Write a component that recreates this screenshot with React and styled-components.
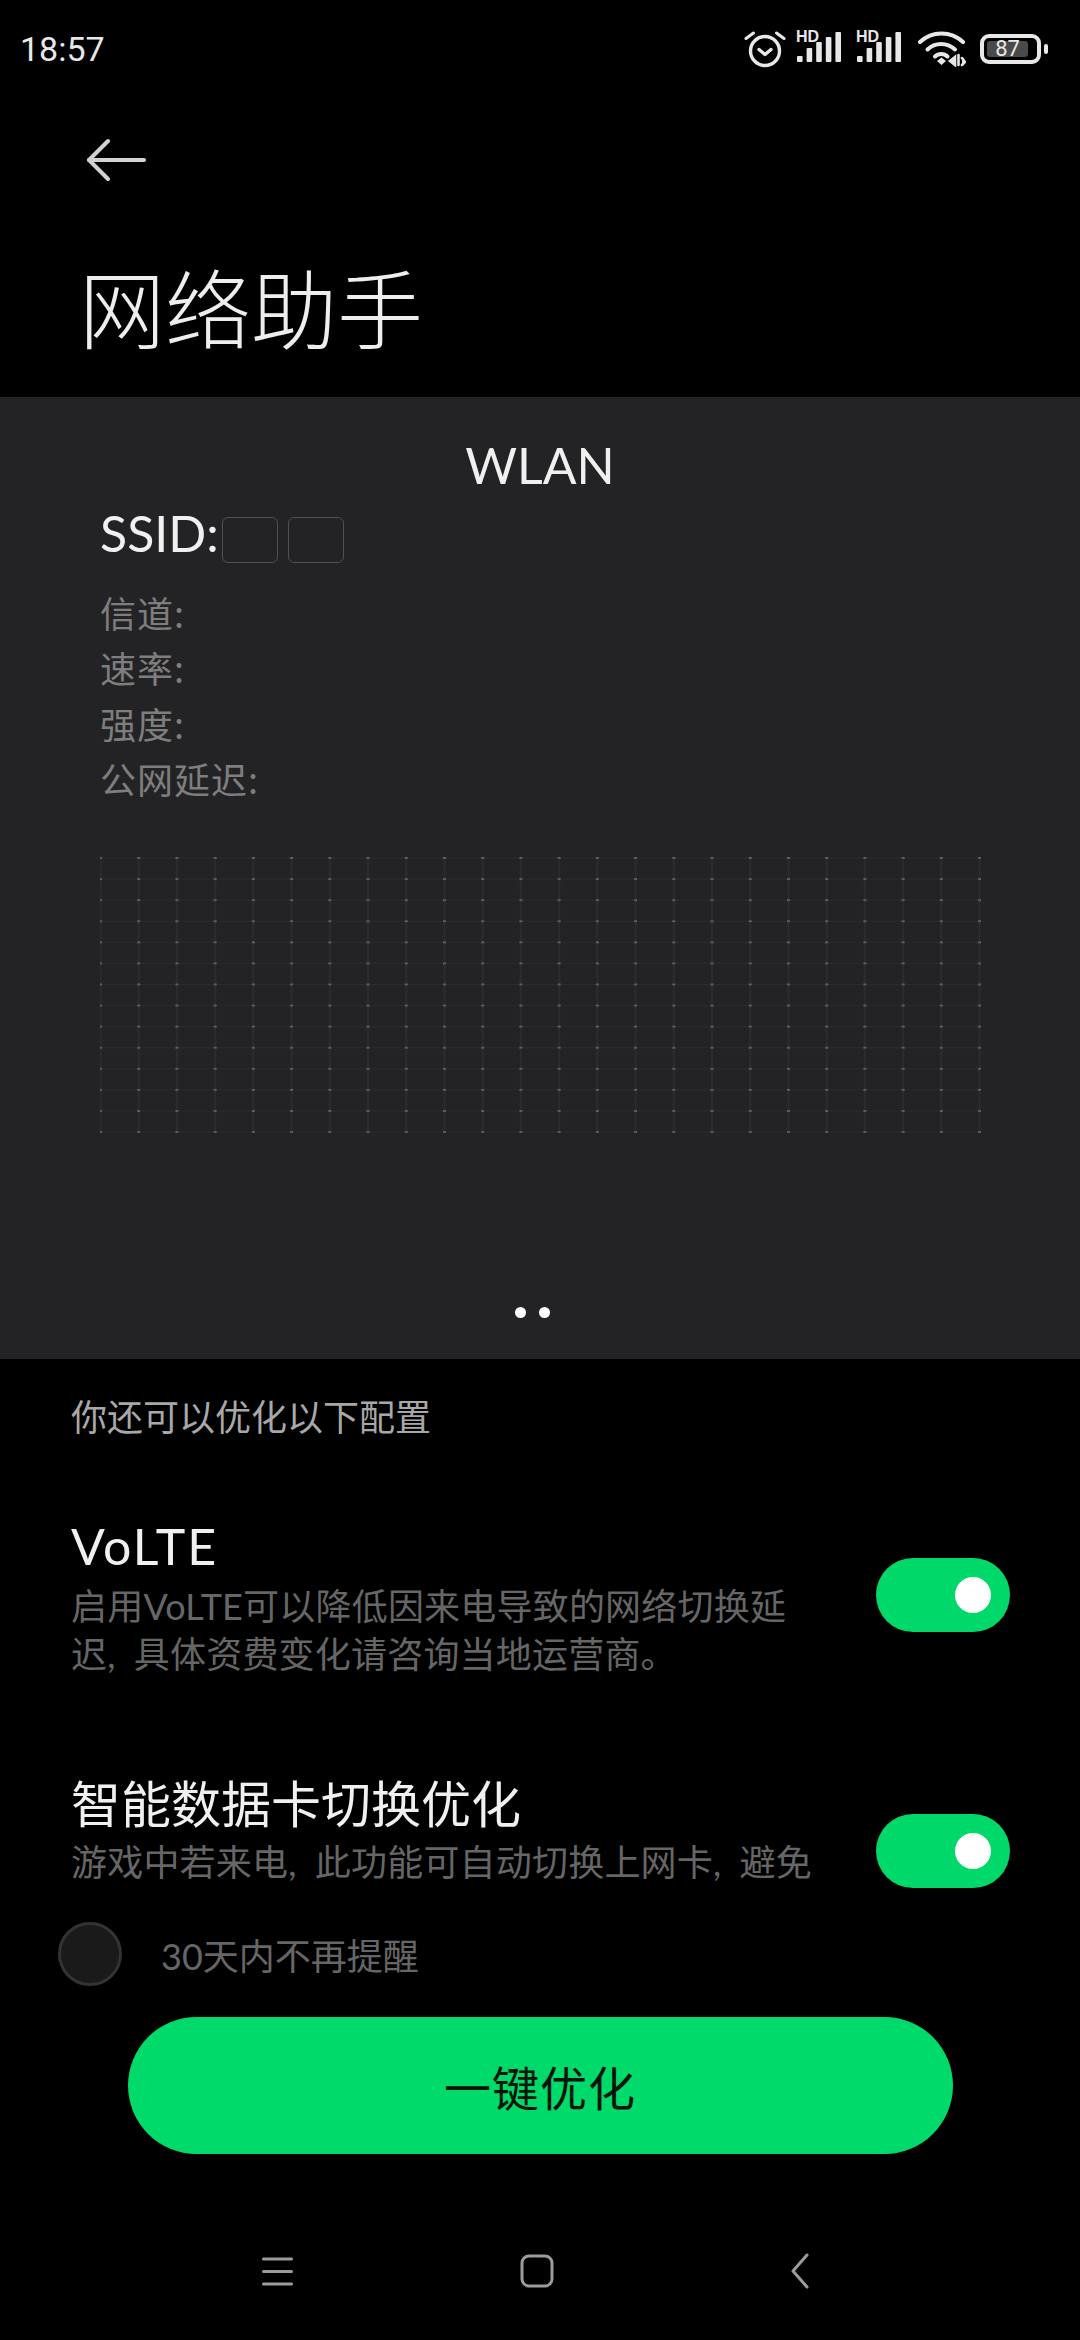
import React from "react";
import styled, { createGlobalStyle } from "styled-components";

const CJK = `"Noto Sans CJK SC", sans-serif`;
const LATIN = `Lato, "Noto Sans CJK SC", sans-serif`;

const Global = createGlobalStyle`
  html, body { margin: 0; padding: 0; background: #000; }
  * { box-sizing: border-box; }
`;

const Page = styled.div`
  width: 1080px;
  height: 2340px;
  background: #000;
  color: #fff;
  display: flex;
  flex-direction: column;
  overflow: hidden;
  font-family: ${CJK};
`;

const StatusBar = styled.div`
  height: 100px;
  padding: 0 39px 2px 20px;
  display: flex;
  align-items: center;
  justify-content: space-between;
`;

const Clock = styled.span`
  font-family: Roboto, sans-serif;
  font-size: 34px;
  color: #e8e8e8;
`;

const StatusIcons = styled.div`
  display: flex;
  align-items: center;
  gap: 10px;
`;

const Signal = styled.div`
  position: relative;
  width: 50px;
  height: 36px;
`;

const SignalTag = styled.span`
  position: absolute;
  left: 0;
  top: -3px;
  font-family: "Liberation Sans", sans-serif;
  font-weight: 700;
  font-size: 16px;
  line-height: 18px;
  color: #e8e8e8;
`;

const WifiSlot = styled.div`
  display: flex;
  margin-left: 2px;
`;

const Battery = styled.div`
  position: relative;
  width: 61px;
  height: 30px;
  border: 4px solid #e8e8e8;
  border-radius: 9px;
  margin-left: 4px;
  padding: 3px;
  &::after {
    content: "";
    position: absolute;
    right: -11px;
    top: 6px;
    width: 4px;
    height: 10px;
    border-radius: 2px;
    background: #e8e8e8;
  }
`;

const BatteryFill = styled.div`
  height: 100%;
  width: 41px;
  border-radius: 3px;
  background: #4a4a4a;
  display: flex;
  align-items: center;
  justify-content: center;
  font-family: Roboto, sans-serif;
  font-size: 22px;
  line-height: 16px;
  color: #e8e8e8;
`;

const BackRow = styled.div`
  height: 60px;
  margin-top: 30px;
  padding-left: 87px;
  display: flex;
  align-items: center;
`;

const Title = styled.h1`
  margin: 0;
  height: 207px;
  padding: 54px 0 0 79px;
  font-size: 86px;
  font-weight: 300;
  line-height: 124px;
  color: #eee;
`;

const Panel = styled.section`
  height: 962px;
  background: #232325;
  padding: 0 100px;
  display: flex;
  flex-direction: column;
  position: relative;
`;

const PanelHead = styled.div`
  margin-top: 38px;
  height: 60px;
  font-family: Lato, sans-serif;
  font-size: 50px;
  line-height: 60px;
  text-align: center;
  color: #f0f0f0;
`;

const SsidRow = styled.div`
  margin-top: 8px;
  height: 60px;
  display: flex;
  align-items: center;
  font-family: Lato, sans-serif;
  font-size: 50px;
  color: #f0f0f0;
`;

const Tofu = styled.span`
  width: 56px;
  height: 46px;
  margin: 14px 10px 0 0;
  border: 1px solid #505052;
  border-radius: 6px;
  &:first-of-type { margin-left: 3px; }
`;

const Stats = styled.div`
  margin-top: 22px;
  display: flex;
  flex-direction: column;
`;

const Stat = styled.div`
  height: 55.3px;
  font-size: 36px;
  line-height: 55px;
  letter-spacing: 1px;
  color: #7e7e7e;
`;

const Chart = styled.svg`
  display: block;
  margin-top: 51px;
  flex: none;
`;

const Dots = styled.div`
  position: absolute;
  left: 515px;
  top: 910px;
  display: flex;
  gap: 13px;
`;

const Dot = styled.span`
  width: 11px;
  height: 11px;
  border-radius: 50%;
  background: #fff;
`;

const Options = styled.div`
  height: 536px;
  padding: 0 70px 0 71px;
  overflow: hidden;
`;

const Hint = styled.div`
  margin-top: 30px;
  margin-bottom: 1px;
  height: 52px;
  font-size: 36px;
  line-height: 52px;
  color: #a8a8a8;
`;

const Option = styled.div`
  margin-top: ${(p) => p.$gap}px;
  display: flex;
  justify-content: space-between;
  align-items: flex-start;
`;

const OptionText = styled.div`
  width: 745px;
`;

const OptionTitle = styled.div`
  font-family: ${LATIN};
  font-size: 50px;
  line-height: 68px;
  color: #f0f0f0;
`;

const LatinTitle = styled(OptionTitle)`
  margin: -2px 0 2px;
  letter-spacing: 2px;
`;

const OptionBody = styled.div`
  font-family: ${LATIN};
  font-size: 36px;
  line-height: 48px;
  letter-spacing: 0.2px;
  color: #666;
`;

const Toggle = styled.div`
  flex: none;
  width: 134px;
  height: 74px;
  margin-top: 44px;
  border-radius: 37px;
  background: #00d86a;
  display: flex;
  align-items: center;
  justify-content: flex-end;
  padding-right: 19px;
`;

const Knob = styled.span`
  width: 36px;
  height: 36px;
  border-radius: 50%;
  background: #fff;
`;

const Footer = styled.div`
  background: #000;
  display: flex;
  flex-direction: column;
`;

const Remind = styled.label`
  height: 64px;
  margin-top: 27px;
  padding-left: 58px;
  display: flex;
  align-items: center;
  gap: 39px;
  font-family: ${LATIN};
  font-size: 36px;
  color: #666;
`;

const Radio = styled.span`
  width: 64px;
  height: 64px;
  border-radius: 50%;
  background: #1a1a1a;
  border: 3px solid #333;
`;

const Primary = styled.button`
  align-self: center;
  margin-top: 31px;
  width: 825px;
  height: 137px;
  border: 0;
  border-radius: 69px;
  background: #00da6a;
  color: #04140b;
  font-family: ${CJK};
  font-size: 47px;
  letter-spacing: 1px;
`;

const NavBar = styled.nav`
  margin-top: 77px;
  height: 80px;
  padding-left: 260px;
  display: grid;
  grid-template-columns: 260px 270px auto;
  align-items: center;
`;

const NavSlot = styled.div`
  display: flex;
  align-items: center;
`;

/* Wireless bars: five rising rounded columns */
function Bars() {
  const tops = [25, 17, 11, 6, 1];
  return (
    <svg width="50" height="36" viewBox="0 0 50 36">
      {tops.map((t, i) => (
        <rect key={i} x={i * 9.6 + 1} y={t} width="5.6" height={31 - t} rx="1" fill="#e8e8e8" />
      ))}
    </svg>
  );
}

function Grid() {
  const cols = Array.from({ length: 24 }, (_, i) => 0.5 + i * 38.22);
  const rows = Array.from({ length: 14 }, (_, i) => 1 + i * 21.08);
  return (
    <Chart width="882" height="278" viewBox="0 0 882 278">
      {cols.map((x) => (
        <line key={x} x1={x} x2={x} y1="0" y2="276" stroke="#2b2b2d" strokeWidth="2.4" />
      ))}
      {rows.map((y) => (
        <line key={y} x1="0" x2="880" y1={y} y2={y} stroke="#2d2d2f" strokeWidth="1" />
      ))}
      {rows.map((y) =>
        cols.map((x) => (
          <rect key={`${x}-${y}`} x={x - 1.5} y={y - 1} width="3" height="2" fill="#5c5c5e" />
        ))
      )}
    </Chart>
  );
}

export default function App() {
  return (
    <Page>
      <Global />
      <StatusBar>
        <Clock>18:57</Clock>
        <StatusIcons>
          <svg width="42" height="38" viewBox="0 0 42 38" fill="none" stroke="#e8e8e8" strokeLinecap="round" strokeLinejoin="round">
            <circle cx="21" cy="21" r="14.5" strokeWidth="3.4" />
            <path d="M15 19.5l6 5 6-5" strokeWidth="3.4" />
            <path d="M2 8.5L9.5 3M40 8.5L32.5 3" strokeWidth="3" />
          </svg>
          <Signal>
            <SignalTag>HD</SignalTag>
            <Bars />
          </Signal>
          <Signal>
            <SignalTag>HD</SignalTag>
            <Bars />
          </Signal>
          <WifiSlot>
            <svg width="48" height="36" viewBox="0 0 48 36" fill="none" stroke="#e8e8e8" strokeWidth="4" strokeLinecap="round">
              <path d="M2 11C14 -0.5 33 -0.5 45 11" />
              <path d="M9.5 18.5C17 11 29 11 37 18.5" />
              <path d="M17 25.5C20.5 22 26 22 29.5 25.5" />
              <path d="M19 30l4.5-3.5L28 30l-4.5 4z" fill="#e8e8e8" stroke="none" />
              <path d="M37 26l-5 4 5 4zM40.5 24v10M44 27l3 4-3 3" strokeWidth="2.6" fill="#e8e8e8" stroke="#e8e8e8" />
            </svg>
          </WifiSlot>
          <Battery>
            <BatteryFill>87</BatteryFill>
          </Battery>
        </StatusIcons>
      </StatusBar>

      <BackRow>
        <svg width="60" height="44" viewBox="0 0 60 44" fill="none" stroke="#d2d2d2" strokeWidth="4" strokeLinecap="round" strokeLinejoin="round">
          <path d="M2 22H57" />
          <path d="M21 3L2 22l19 19" />
        </svg>
      </BackRow>

      <Title>网络助手</Title>

      <Panel>
        <PanelHead>WLAN</PanelHead>
        <SsidRow>
          SSID:
          <Tofu />
          <Tofu />
        </SsidRow>
        <Stats>
          <Stat>信道:</Stat>
          <Stat>速率:</Stat>
          <Stat>强度:</Stat>
          <Stat>公网延迟:</Stat>
        </Stats>
        <Grid />
        <Dots>
          <Dot />
          <Dot />
        </Dots>
      </Panel>

      <Options>
        <Hint>你还可以优化以下配置</Hint>
        <Option $gap={73}>
          <OptionText>
            <LatinTitle>VoLTE</LatinTitle>
            <OptionBody>启用VoLTE可以降低因来电导致的网络切换延迟,{"\u2002"}具体资费变化请咨询当地运营商。</OptionBody>
          </OptionText>
          <Toggle>
            <Knob />
          </Toggle>
        </Option>
        <Option $gap={92}>
          <OptionText>
            <OptionTitle>智能数据卡切换优化</OptionTitle>
            <OptionBody>游戏中若来电,{"\u2002"}此功能可自动切换上网卡,{"\u2002"}避免</OptionBody>
          </OptionText>
          <Toggle>
            <Knob />
          </Toggle>
        </Option>
      </Options>

      <Footer>
        <Remind>
          <Radio />
          30天内不再提醒
        </Remind>
        <Primary>一键优化</Primary>
        <NavBar>
          <NavSlot>
            <svg width="34" height="30" viewBox="0 0 34 30" stroke="#9c9c9c" strokeWidth="3" strokeLinecap="round">
              <path d="M3.5 3h28M3.5 15.5h28M3.5 28h28" />
            </svg>
          </NavSlot>
          <NavSlot>
            <svg width="34" height="34" viewBox="0 0 34 34" fill="none" stroke="#9c9c9c" strokeWidth="3">
              <rect x="2" y="2" width="30" height="30" rx="7" />
            </svg>
          </NavSlot>
          <NavSlot>
            <svg width="20" height="36" viewBox="0 0 20 36" fill="none" stroke="#9c9c9c" strokeWidth="3" strokeLinecap="round" strokeLinejoin="round">
              <path d="M17 2L3 18l14 16" />
            </svg>
          </NavSlot>
        </NavBar>
      </Footer>
    </Page>
  );
}
